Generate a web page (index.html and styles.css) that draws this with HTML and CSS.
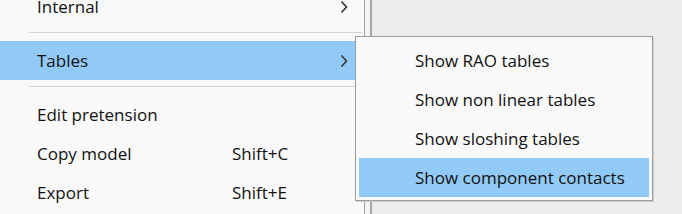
FILE: index.html
```html
<!DOCTYPE html>
<html>
<head>
    <meta charset="utf-8">
    <link rel="stylesheet" href="styles.css">
</head>
<body>
    <div class="screen">
        <div class="menu">
            <div class="item">
                <span class="label">Internal</span>
                <span class="shortcut"></span>
                <svg class="arrow" width="8" height="14" viewBox="0 0 8 14"><polyline points="1.5,1.5 6.5,7 1.5,12.5" /></svg>
            </div>
            <div class="separator"></div>
            <div class="item active">
                <span class="label">Tables</span>
                <span class="shortcut"></span>
                <svg class="arrow" width="8" height="14" viewBox="0 0 8 14"><polyline points="1.5,1.5 6.5,7 1.5,12.5" /></svg>
            </div>
            <div class="separator"></div>
            <div class="item">
                <span class="label">Edit pretension</span>
                <span class="shortcut"></span>
            </div>
            <div class="item">
                <span class="label">Copy model</span>
                <span class="shortcut">Shift+C</span>
            </div>
            <div class="item">
                <span class="label">Export</span>
                <span class="shortcut">Shift+E</span>
            </div>
        </div>
        <div class="edge"></div>
        <div class="frame-line"></div>
        <div class="backdrop"></div>

        <div class="submenu">
            <div class="sub-item">Show RAO tables</div>
            <div class="sub-item">Show non linear tables</div>
            <div class="sub-item">Show sloshing tables</div>
            <div class="sub-item active">Show component contacts</div>
        </div>
    </div>
</body>
</html>
```

FILE: styles.css
```css
* {
    box-sizing: border-box;
}

html, body {
    margin: 0;
    padding: 0;
    width: 682px;
    height: 214px;
    overflow: hidden;
}

body {
    font-family: 'Open Sans', 'Noto Sans', sans-serif;
    font-size: 17px;
    color: #111;
    background: #ececec;
}

.screen {
    position: relative;
    display: flex;
    height: 214px;
}

.menu {
    width: 365px;
    margin-top: -13px;
    background: #f9f9f9;
    border-right: 1px solid #a3a3a3;
}

.item {
    display: flex;
    align-items: center;
    height: 39px;
    line-height: 39px;
    padding-left: 37px;
}

.item.active {
    background: #91c9f7;
}

.label {
    width: 195px;
}

.shortcut {
    width: 108px;
}

.arrow {
    fill: none;
    stroke: #333;
    stroke-width: 1.6;
}

.separator {
    height: 15px;
    padding-top: 6px;
    margin-left: 29px;
    margin-right: 2px;
}

.separator::before {
    content: '';
    display: block;
    height: 1px;
    background: #d5d5d5;
}

.edge {
    width: 5px;
    background: #f4f4f4;
}

.frame-line {
    width: 2px;
    background: #a6a6a6;
}

.backdrop {
    flex: 1;
    background: #ececec;
}

/* submenu lies over the parent menu */
.submenu {
    position: absolute;
    left: 355px;
    top: 36px;
    width: 298px;
    padding: 4px 3px 3px 3px;
    background: #f9f9f9;
    border: 1px solid #9c9c9c;
    box-shadow: 1px 1px 0 #cfcfcf;
}

.sub-item {
    height: 39px;
    line-height: 39px;
    padding-left: 56px;
}

.sub-item.active {
    background: #91c9f7;
}
```
